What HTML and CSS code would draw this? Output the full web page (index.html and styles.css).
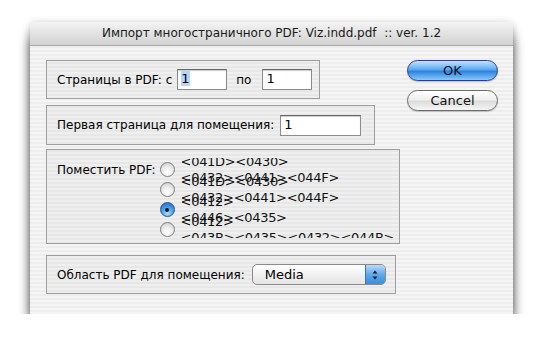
FILE: index.html
```html
<!DOCTYPE html>
<html lang="ru">
<head>
  <meta charset="UTF-8">
  <title>Импорт многостраничного PDF</title>
  <link rel="stylesheet" href="styles.css">
</head>
<body>
  <div class="window">
    <div class="titlebar">Импорт многостраничного PDF: Viz.indd.pdf &nbsp;:: ver. 1.2</div>

    <div class="content">
      <div class="groups">
        <div class="group group-pages">
          <span>Страницы в PDF: с</span>
          <span class="field field-small"><span class="selected">1</span></span>
          <span class="label-to">по</span>
          <span class="field field-small">1</span>
        </div>

        <div class="group group-first">
          <span>Первая страница для помещения:</span>
          <span class="field field-wide">1</span>
        </div>

        <div class="group group-place">
          <span class="place-label">Поместить PDF:</span>
          <div class="radio-list">
            <div class="option">
              <span class="radio"></span>
              <span class="option-text">&lt;041D&gt;&lt;0430&gt;<br>&lt;0432&gt;&lt;0441&gt;&lt;044F&gt;</span>
            </div>
            <div class="option">
              <span class="radio"></span>
              <span class="option-text">&lt;041D&gt;&lt;0430&gt;<br>&lt;0432&gt;&lt;0441&gt;&lt;044F&gt;</span>
            </div>
            <div class="option">
              <span class="radio checked"></span>
              <span class="option-text">&lt;0412&gt;<br>&lt;0446&gt;&lt;0435&gt;</span>
            </div>
            <div class="option">
              <span class="radio"></span>
              <span class="option-text">&lt;0412&gt;<br>&lt;043B&gt;&lt;0435&gt;&lt;0432&gt;&lt;044B&gt;</span>
            </div>
          </div>
        </div>

        <div class="group group-area">
          <span>Область PDF для помещения:</span>
          <div class="popup">
            <span class="popup-value">Media</span>
            <span class="popup-arrows">
              <svg width="8" height="12" viewBox="0 0 8 12">
                <path d="M4 1.5 L6.5 4.5 L1.5 4.5 Z"/>
                <path d="M4 10.5 L6.5 7.5 L1.5 7.5 Z"/>
              </svg>
            </span>
          </div>
        </div>
      </div>

      <div class="buttons">
        <button class="btn btn-default">OK</button>
        <button class="btn">Cancel</button>
      </div>
    </div>
  </div>
</body>
</html>
```

FILE: styles.css
```css
body {
  margin: 0;
  background-color: #fff;
  font-family: "DejaVu Sans", "Liberation Sans", sans-serif;
  font-size: 12px;
  color: #000;
}

.window {
  width: 483px;
  height: 292px;
  margin: 22px 0 0 30px;
  border-radius: 6px 6px 0 0;
  background: repeating-linear-gradient(to bottom, #ededed 0, #ededed 2px, #f5f5f5 2px, #f5f5f5 4px);
  box-shadow: 0 14px 12px rgba(0, 0, 0, 0.6), 0 2px 8px rgba(0, 0, 0, 0.3);
  display: flex;
  flex-direction: column;
}

.titlebar {
  height: 23px;
  line-height: 23px;
  text-align: center;
  font-size: 12px;
  color: #1a1a1a;
  border-radius: 6px 6px 0 0;
  background: linear-gradient(to bottom, #f4f4f4 0%, #e2e2e2 50%, #d3d3d3 100%);
  border-bottom: 1px solid #a8a8a8;
}

.content {
  display: flex;
  padding: 14px 15px 0 16px;
}

.groups {
  flex: 1;
  display: flex;
  flex-direction: column;
  align-items: flex-start;
}

.group {
  box-sizing: border-box;
  border: 1px solid #9e9e9e;
  background-color: rgba(0, 0, 0, 0.025);
  display: flex;
  align-items: center;
  padding-left: 10px;
}

.group-pages {
  width: 274px;
  height: 39px;
}

.group-first {
  width: 329px;
  height: 40px;
  margin-top: 6px;
}

.group-place {
  width: 354px;
  height: 95px;
  margin-top: 4px;
  align-items: flex-start;
}

.group-area {
  width: 350px;
  height: 39px;
  margin-top: 11px;
}

.field {
  box-sizing: border-box;
  height: 21px;
  line-height: 18px;
  padding-left: 3px;
  background-color: #fff;
  border: 1px solid #8c8c8c;
  border-top-color: #666;
  box-shadow: inset 0 1px 1px rgba(0, 0, 0, 0.2);
  font-size: 13px;
}

.field-small {
  width: 50px;
  margin-left: 5px;
}

.field-wide {
  width: 81px;
  margin-left: 6px;
}

.selected {
  background-color: #b5d5ff;
}

.label-to {
  margin: 0 6px 0 9px;
}

.place-label {
  margin-top: 13px;
}

.radio-list {
  height: 80px;
  margin-top: 8px;
  margin-left: 4px;
  overflow: hidden;
  padding-top: 1px;
  box-sizing: border-box;
}

.option {
  display: flex;
  align-items: flex-start;
  height: 20px;
}

.radio {
  box-sizing: border-box;
  width: 15px;
  height: 15px;
  margin-top: 3px;
  border-radius: 50%;
  border: 1px solid #7d7d7d;
  background: radial-gradient(circle at 50% 75%, #ffffff 0%, #f0f0f0 40%, #c9c9c9 100%);
  flex-shrink: 0;
  position: relative;
}

.radio.checked {
  border-color: #2f4f8f;
  background: radial-gradient(circle at 50% 80%, #a9e1ff 0%, #4aa3ec 45%, #1e62c4 100%);
}

.radio.checked::after {
  content: "";
  position: absolute;
  left: 4.5px;
  top: 4.5px;
  width: 4px;
  height: 4px;
  border-radius: 50%;
  background-color: #111;
}

.option-text {
  margin-left: 6px;
  margin-top: -5px;
  line-height: 16px;
  font-size: 13px;
  white-space: nowrap;
  color: #111;
  letter-spacing: -0.3px;
}

.popup {
  box-sizing: border-box;
  width: 134px;
  height: 21px;
  margin-left: 7px;
  border: 1px solid #8a8a8a;
  border-radius: 5px;
  background: linear-gradient(to bottom, #ffffff 0%, #f2f2f2 50%, #e4e4e4 100%);
  display: flex;
  align-items: center;
  overflow: hidden;
}

.popup-value {
  flex: 1;
  padding-left: 12px;
  font-size: 13px;
}

.popup-arrows {
  width: 19px;
  height: 100%;
  display: flex;
  align-items: center;
  justify-content: center;
  background: linear-gradient(to bottom, #b6dcfa 0%, #5fa8ec 50%, #3d8de0 100%);
  border-left: 1px solid #4a6fa3;
}

.popup-arrows svg path {
  fill: #1a1a1a;
}

.buttons {
  display: flex;
  flex-direction: column;
  align-items: flex-end;
  gap: 9px;
}

.btn {
  box-sizing: border-box;
  width: 91px;
  height: 21px;
  border-radius: 11px;
  border: 1px solid #6b6b6b;
  background: linear-gradient(to bottom, #ffffff 0%, #f0f0f0 45%, #dcdcdc 55%, #f6f6f6 100%);
  font-family: "DejaVu Sans", "Liberation Sans", sans-serif;
  font-size: 13px;
  color: #111;
  padding: 0;
  box-shadow: 0 1px 1px rgba(0, 0, 0, 0.2);
}

.btn-default {
  border-color: #2b3f8c;
  background: linear-gradient(to bottom, #c4e4ff 0%, #5aa9f0 45%, #2f82e0 55%, #86cbfc 100%);
}
```
